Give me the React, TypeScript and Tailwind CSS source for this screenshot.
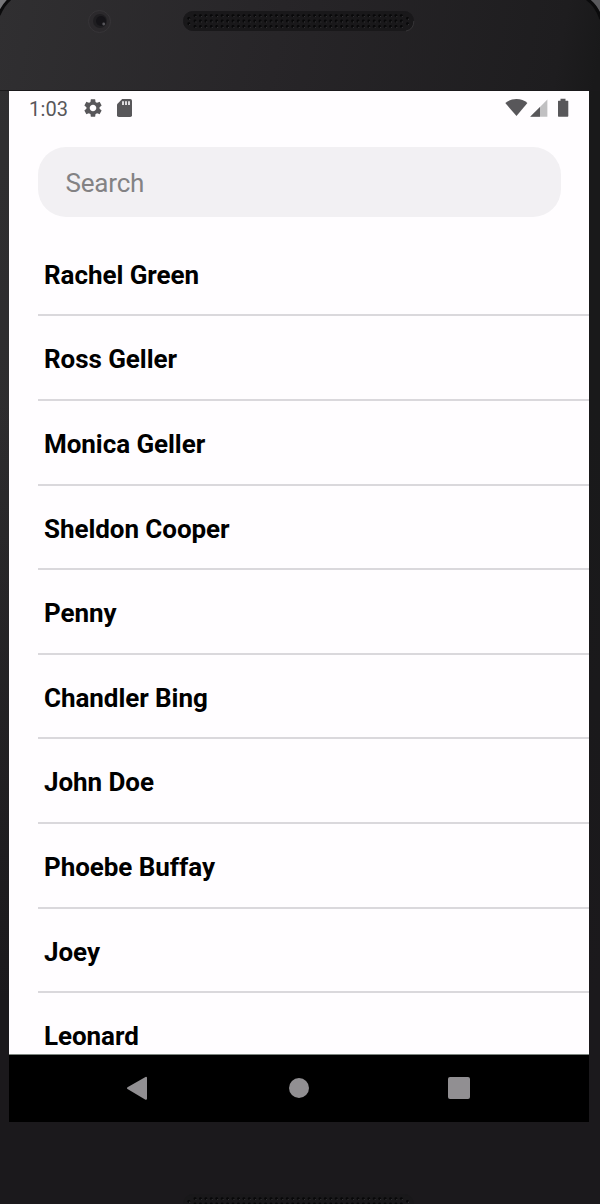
import React from "react";
import { MdSettings } from "react-icons/md";

const contacts = [
  "Rachel Green",
  "Ross Geller",
  "Monica Geller",
  "Sheldon Cooper",
  "Penny",
  "Chandler Bing",
  "John Doe",
  "Phoebe Buffay",
  "Joey",
  "Leonard",
];

function SpeakerGrille() {
  const columns = Array.from({ length: 39 }, (_, i) => 12 + i * 5.43);
  const holes = [
    ...columns.flatMap((x) => [4.6, 10, 15.4].map((y) => ({ x, y }))),
    { x: 5.8, y: 7.3 },
    { x: 5.8, y: 12.7 },
    { x: 224.5, y: 7.3 },
    { x: 224.5, y: 12.7 },
  ];
  return (
    <svg width="232" height="21" viewBox="0 0 232 21">
      <rect x="0.5" y="0.5" width="230" height="19" rx="9" fill="#19181a" stroke="#19181a" />
      <path d="M223 20Q230.8 18.5 230.8 10" fill="none" stroke="#3b3a3c" strokeWidth="0.8" />
      {holes.map((h, i) => (
        <g key={i}>
          <circle cx={h.x} cy={h.y} r="1.4" fill="#080809" />
          <circle cx={h.x + 0.9} cy={h.y + 0.9} r="0.6" fill="#39393b" />
        </g>
      ))}
    </svg>
  );
}

function TopBezel() {
  return (
    <div className="relative h-[91px] border-b border-[#1a191b]">
      <svg className="absolute left-0 top-0" width="600" height="90" viewBox="0 0 600 90">
        <path d="M0 0H10Q4 4 0 12Z" fill="#77777a" />
        <path d="M10 -1Q3 5 -1 15" fill="none" stroke="#0b0b0c" strokeWidth="3" />
        <path d="M590 0H600V12Q596 4 590 0Z" fill="#59595c" />
        <path d="M587 -1Q596 5 601 19" fill="none" stroke="#0b0b0c" strokeWidth="3" />
        <circle cx="99.5" cy="21.5" r="11" fill="#2b292c" stroke="#373538" />
        <circle cx="100" cy="21" r="7" fill="#1f1e21" />
        <circle cx="101" cy="21" r="5" fill="#151418" />
        <circle cx="103.7" cy="24" r="1.4" fill="#57565b" />
      </svg>
      <div className="absolute left-[183px] top-[11px]">
        <SpeakerGrille />
      </div>
    </div>
  );
}

function StatusBar() {
  return (
    <div className="flex h-[34px] items-center pl-[20px] pr-[18px] text-[#58575a]">
      <span className="w-[53px] pt-[2px] text-[20px] leading-[34px] tracking-[0.15px]">1:03</span>
      <MdSettings className="size-[22px]" />
      <svg className="ml-[13px]" width="15" height="18" viewBox="0 0 15 18">
        <path d="M5.2 0H13.2Q15 0 15 1.8V16.2Q15 18 13.2 18H1.8Q0 18 0 16.2V5.2Z" fill="currentColor" />
        <path d="M6 2.3V6M9 2.3V6M12 2.3V6" stroke="#fffdff" strokeWidth="1.6" />
      </svg>
      <svg className="ml-auto" width="66" height="20" viewBox="0 0 66 20">
        <path d="M0.3 5Q5 1 11.4 1Q18 1 22.4 5L11.5 18Z" fill="currentColor" />
        <path d="M42.4 1.6V18.8H25.2Z" fill="#c1c0c2" />
        <path d="M35 9V18.8H25.2Z" fill="currentColor" />
        <path d="M55.5 0.7H60.5V2.7H62.8Q63.3 2.7 63.3 3.3V18.1Q63.3 18.8 62.6 18.8H53.6Q53 18.8 53 18.1V3.3Q53 2.7 53.5 2.7H55.5Z" fill="currentColor" />
      </svg>
    </div>
  );
}

function NavigationBar() {
  return (
    <div className="flex h-[68px] shrink-0 border-t border-[#7d857f] bg-black pl-[117px]">
      <svg className="mt-[20px]" width="24" height="26" viewBox="0 0 24 26">
        <path d="M2 13.2L20 2.8V23.8Z" fill="#918f92" stroke="#918f92" strokeWidth="2" strokeLinejoin="round" />
      </svg>
      <div className="ml-[139px] mt-[23px] size-[20px] rounded-full bg-[#918f92]" />
      <div className="ml-[139px] mt-[22px] size-[22px] rounded-[2px] bg-[#918f92]" />
    </div>
  );
}

export default function App() {
  return (
    <div
      className="h-[1204px] w-[600px] overflow-hidden bg-[linear-gradient(100deg,#302f31_0px,#272528_280px,#1e1d1f_560px,#19191a_600px)]"
      style={{ fontFamily: "Roboto, sans-serif" }}
    >
      <div className="h-full bg-[linear-gradient(180deg,transparent_0px,transparent_400px,#1b191c_1000px)]">
        <TopBezel />
        <main className="ml-[9px] flex h-[1031px] w-[580px] flex-col bg-[#fffdff]">
          <StatusBar />
          <div className="ml-[28.5px] mt-[22.4px] shrink-0">
            <input
              type="text"
              placeholder="Search"
              className="block h-[70px] w-[523.5px] rounded-[28px] bg-[#f2f0f3] px-[28px] pt-[2px] text-[26px] tracking-[-0.2px] text-black outline-none placeholder:text-[#838284]"
            />
          </div>
          <ul className="ml-[28.5px] mt-[14.5px] min-h-0 flex-1 overflow-hidden">
            {contacts.map((name) => (
              <li
                key={name}
                className="flex h-[84.6px] items-center border-b-2 border-[#dad8dc] pl-[6.5px] pt-[4.4px] text-[26px] font-bold tracking-[-0.06px] text-black"
              >
                {name}
              </li>
            ))}
          </ul>
          <NavigationBar />
        </main>
        <div className="ml-[183px] mt-[72px]">
          <SpeakerGrille />
        </div>
      </div>
    </div>
  );
}
